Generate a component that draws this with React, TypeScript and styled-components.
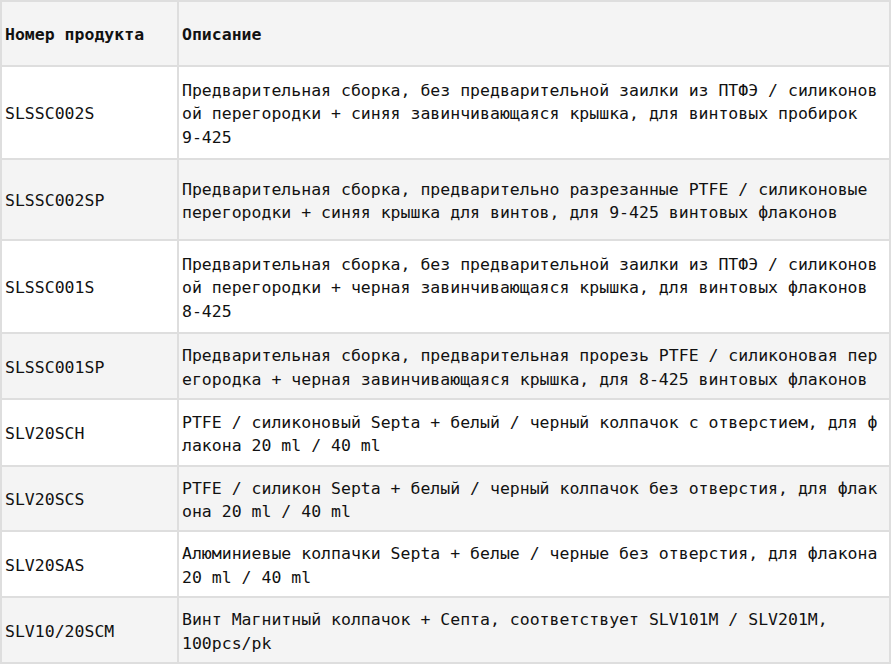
import { createGlobalStyle, styled } from "styled-components";

const GlobalStyle = createGlobalStyle`
  html, body {
    margin: 0;
    padding: 0;
    background: #ffffff;
  }
`;

type Product = {
  code: string;
  desc: string;
  // last token that the reference keeps on one line
  tail?: string;
  h: number;
};

const products: Product[] = [
  {
    code: "SLSSC002S",
    desc: "Предварительная сборка, без предварительной заилки из ПТФЭ / силиконовой перегородки + синяя завинчивающаяся крышка, для винтовых пробирок ",
    tail: "9-425",
    h: 91,
  },
  {
    code: "SLSSC002SP",
    desc: "Предварительная сборка, предварительно разрезанные PTFE / силиконовые перегородки + синяя крышка для винтов, для 9-425 винтовых флаконов",
    h: 79,
  },
  {
    code: "SLSSC001S",
    desc: "Предварительная сборка, без предварительной заилки из ПТФЭ / силиконовой перегородки + черная завинчивающаяся крышка, для винтовых флаконов ",
    tail: "8-425",
    h: 91,
  },
  {
    code: "SLSSC001SP",
    desc: "Предварительная сборка, предварительная прорезь PTFE / силиконовая перегородка + черная завинчивающаяся крышка, для 8-425 винтовых флаконов",
    h: 64,
  },
  {
    code: "SLV20SCH",
    desc: "PTFE / силиконовый Septa + белый / черный колпачок с отверстием, для флакона 20 ml / 40 ml",
    h: 65,
  },
  {
    code: "SLV20SCS",
    desc: "PTFE / силикон Septa + белый / черный колпачок без отверстия, для флакона 20 ml / 40 ml",
    h: 63,
  },
  {
    code: "SLV20SAS",
    desc: "Алюминиевые колпачки Septa + белые / черные без отверстия, для флакона 20 ml / 40 ml",
    h: 64,
  },
  {
    code: "SLV10/20SCM",
    desc: "Винт Магнитный колпачок + Септа, соответствует SLV101M / SLV201M, ",
    tail: "100pcs/pk",
    h: 64,
  },
];

const App = () => {
  return (
    <>
      <GlobalStyle />
      <Table>
        <Row $h={63}>
          <HeadCell>Номер продукта</HeadCell>
          <HeadCell>Описание</HeadCell>
        </Row>
        {products.map((p, i) => (
          <Row key={p.code} $h={p.h}>
            <Cell $striped={i % 2 === 1}>{p.code}</Cell>
            <DescCell $striped={i % 2 === 1}>
              <span>
                {p.desc}
                {p.tail && <NoWrap>{p.tail}</NoWrap>}
              </span>
            </DescCell>
          </Row>
        ))}
      </Table>
    </>
  );
};

const Table = styled.div`
  display: flex;
  flex-flow: column nowrap;
  gap: 2px;
  width: 891px;
  box-sizing: border-box;
  padding: 2px;
  background: #dedede;
  font-family: "DejaVu Sans Mono", "Liberation Mono", monospace;
  font-size: 16.5px;
  line-height: 23.4px;
  color: #111111;
`;

const Row = styled.div<{ $h: number }>`
  display: grid;
  grid-template-columns: 175px 1fr;
  gap: 2px;
  height: ${(p) => p.$h}px;
`;

const Cell = styled.div<{ $striped?: boolean }>`
  display: flex;
  align-items: center;
  padding: 3px 7px 0 3px;
  background: ${(p) => (p.$striped ? "#f4f4f4" : "#ffffff")};
`;

const DescCell = styled(Cell)`
  word-break: break-all;
`;

const NoWrap = styled.span`
  white-space: nowrap;
`;

const HeadCell = styled(Cell)`
  background: #f4f4f4;
  font-weight: bold;
`;

export default App;
